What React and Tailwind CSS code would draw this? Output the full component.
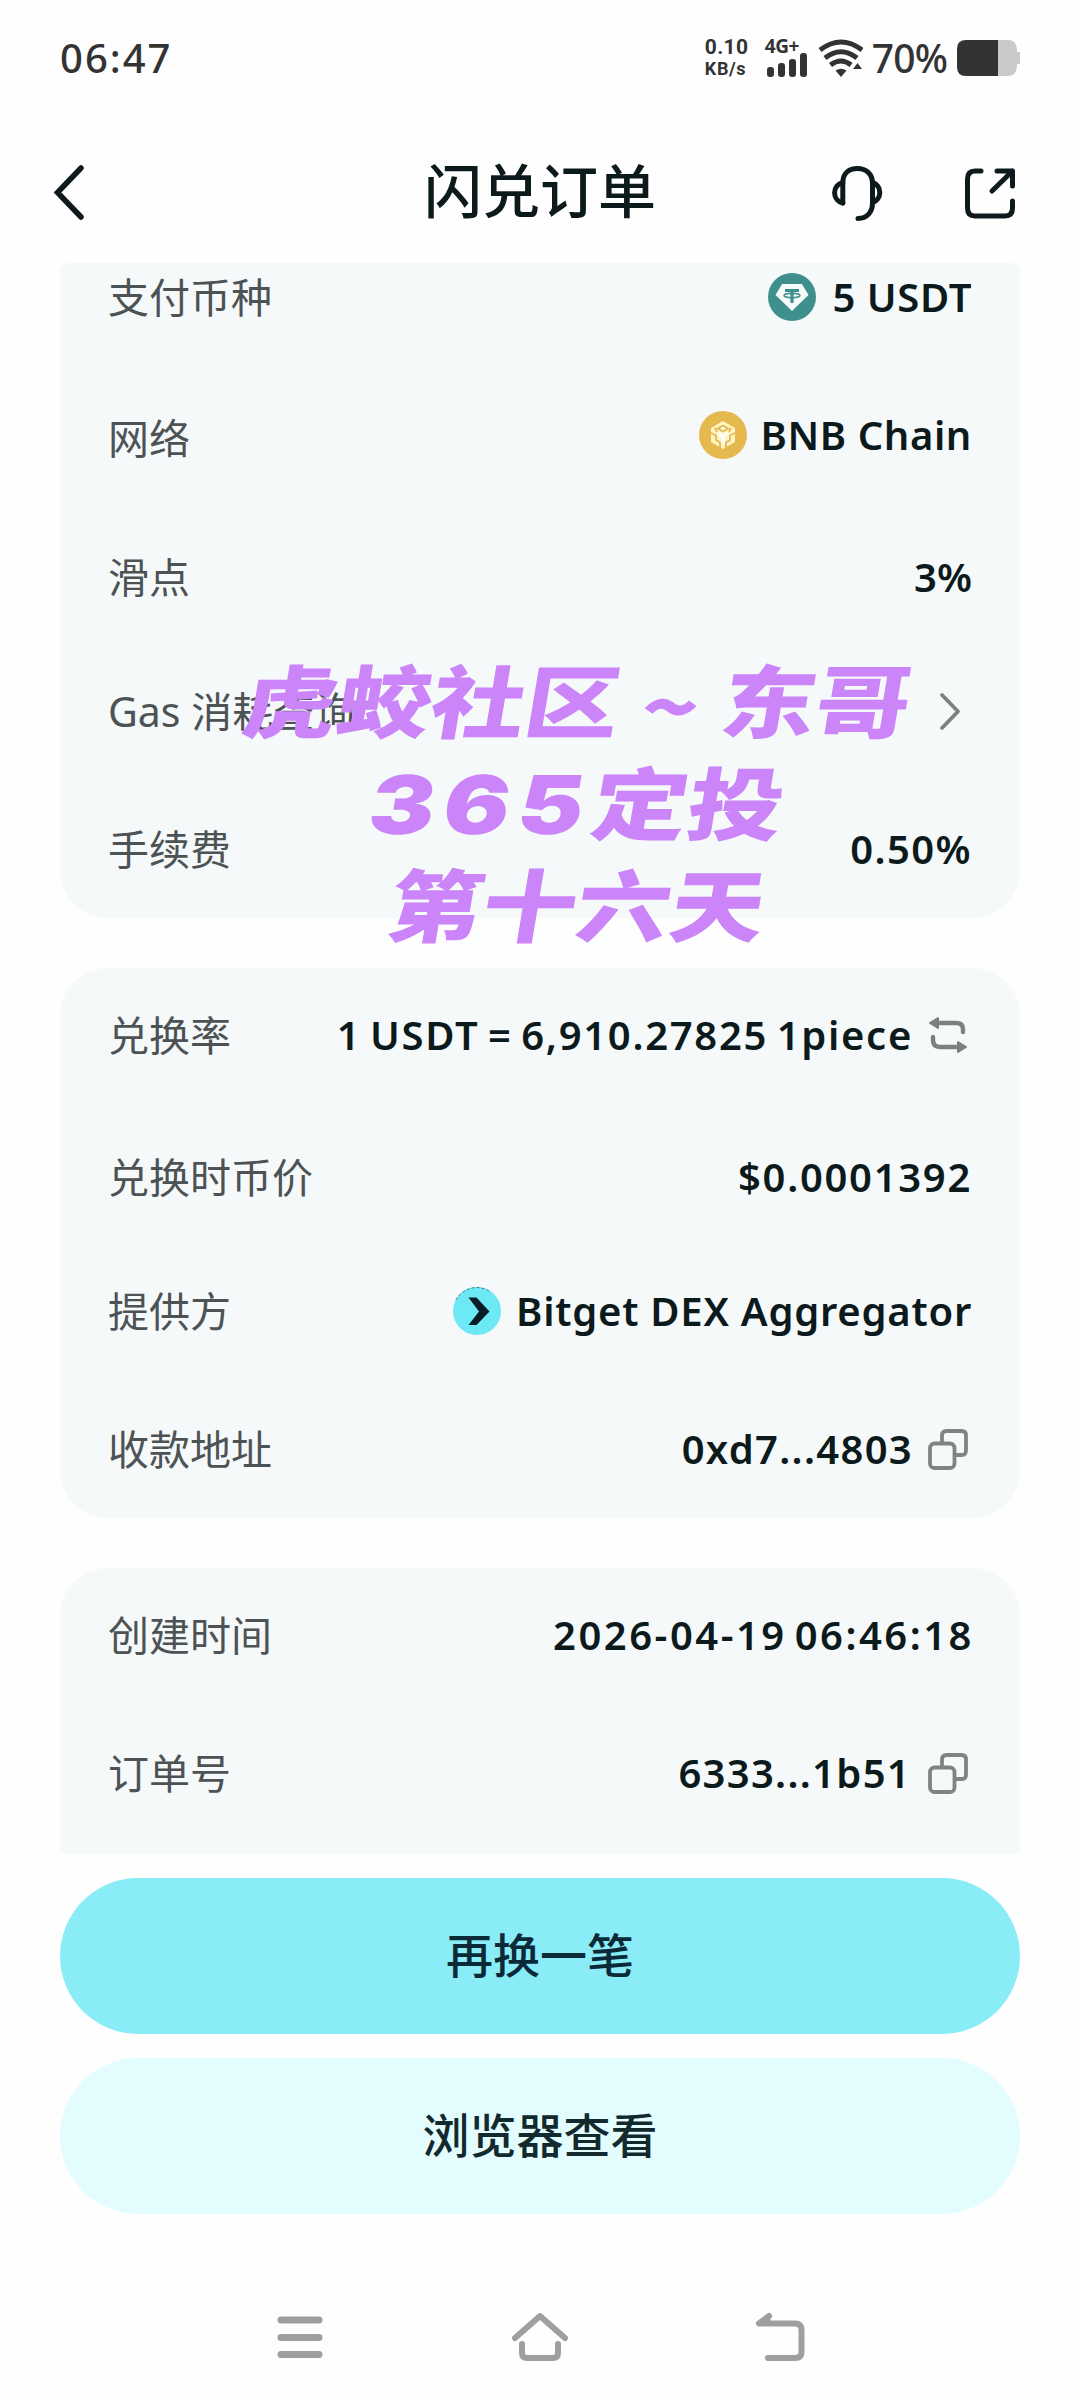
// src/App.jsx
const StatusBar = () => (
  <div className="flex h-[116px] items-center justify-between pl-[60px] pr-[60px] text-[#333333]">
    <span className="text-[40px] font-medium tracking-[2px]">06:47</span>
    <div className="flex items-center">
      <div className="mr-[16px] flex w-[44px] flex-col font-['Roboto'] font-bold">
        <span className="h-[22px] text-[21px] leading-[22px] tracking-[0.3px]">0.10</span>
        <span className="h-[22px] text-[18px] leading-[22px] tracking-[0.6px]">KB/s</span>
      </div>
      <div className="mr-[10px] flex w-[43px] flex-col">
        <span className="h-[15px] text-[19px] font-bold leading-[15px] tracking-[-0.5px]">4G+</span>
        <svg width="43" height="24" viewBox="0 0 43 24" fill="currentColor" className="overflow-visible">
          <rect x="2" y="13" width="7" height="10" rx="3" />
          <rect x="13" y="9" width="7" height="14" rx="3" />
          <rect x="24" y="5" width="7" height="18" rx="3" />
          <rect x="35" y="-1" width="7" height="24" rx="3" />
        </svg>
      </div>
      <svg className="mr-[9px]" width="45" height="38" viewBox="0 0 45 38">
        <g fill="none" stroke="currentColor" strokeWidth="5">
          <path d="M2 11Q23 -5 44 11" />
          <path d="M7 19Q23 6.500 39 19" />
          <path d="M12.500 26Q23 18 33 26" />
        </g>
        <path d="M17.500 31.500Q23 28 28.500 31.500L23 38Z" fill="currentColor" />
        <path d="M35 30L39.500 24L44 30Z" fill="currentColor" />
      </svg>
      <span className="mr-[10px] text-[39px] font-medium tracking-[-0.9px]">70%</span>
      <svg width="63" height="36" viewBox="0 0 63 36">
        <path d="M41 0H51Q59 0 60 9V12H63V24H60V27Q59 36 51 36H41Z" fill="#cacaca" />
        <path d="M9 0H41V36H9Q0 36 0 27V9Q0 0 9 0Z" fill="#333333" />
      </svg>
    </div>
  </div>
);

const Header = () => (
  <header className="grid h-[147px] grid-cols-[1fr_auto_1fr] items-start px-[52px] pt-[46px] text-[#0d1a1c]">
    <svg width="36" height="60" viewBox="0 0 36 60" fill="none" stroke="currentColor" strokeWidth="5.500">
      <path d="M29 6L5.500 30.500L29 55" strokeLinecap="round" strokeLinejoin="miter" />
    </svg>
    <h1 className="text-[58px] font-medium leading-[58px]">闪兑订单</h1>
    <div className="flex justify-end">
      <svg className="mr-[75px]" width="60" height="60" viewBox="0 0 60 60" fill="none" stroke="currentColor" strokeWidth="5" strokeLinecap="round" strokeLinejoin="round">
        <path d="M15.800 41V21C15.800 11 22 6.500 30.500 6.500S45.500 12 45.500 21V41C45.500 50 40 56.500 31 56.500" />
        <path d="M15.800 20.500A10.500 10.500 0 0 0 15.800 41" />
        <path d="M45.500 20.500A10.500 10.500 0 0 1 45.500 40.500" />
      </svg>
      <svg className="mr-[10px]" width="56" height="60" viewBox="0 0 56 60" fill="none" stroke="currentColor" strokeWidth="5" strokeLinecap="round" strokeLinejoin="round">
        <path d="M19 9H13Q5.500 9 5.500 17V46Q5.500 54 13 54H43Q50.500 54 50.500 46V39" />
        <path d="M35 9H50.500V24M50.500 9L30 29" />
      </svg>
    </div>
  </header>
);

const TetherIcon = () => (
  <svg width="48" height="48" viewBox="0 0 48 48">
    <circle cx="24" cy="24" r="24" fill="#3f8f8c" />
    <path d="M14 11H34L40.500 22L24 38L7.500 22Z" fill="#f5fbfb" />
    <path d="M17 17.500H31M24 17.500V30" fill="none" stroke="#3f8f8c" strokeWidth="3.200" />
    <ellipse cx="24" cy="22.500" rx="8" ry="2.200" fill="none" stroke="#3f8f8c" strokeWidth="1.500" />
  </svg>
);

const BnbIcon = () => (
  <svg width="48" height="48" viewBox="0 0 48 48">
    <circle cx="24" cy="24" r="24" fill="#e5b94e" />
    {/* light cube with its front edges cut out */}
    <path d="M24 10L36 17V31L24 38L12 31V17Z" fill="#fff3c4" />
    <path d="M24 13.500L31 17.500L24 21.500L17 17.500Z" fill="#e5b94e" />
    <path d="M24 15.500L27 17.500L24 19.500L21 17.500Z" fill="#fffdf2" />
    <g fill="none" stroke="#e5b94e" strokeWidth="1.800" strokeLinejoin="round">
      <path d="M12 22L17 24.500V29L21 31.500V37M36 22L31 24.500V29L27 31.500V37" />
      <path d="M16 17L18 21M32 17L30 21" />
    </g>
    <path d="M19 20.500L24 23L29 20.500V24L26 27V31L24 33L22 31V27L19 24Z" fill="#fffdf2" />
  </svg>
);

const BitgetIcon = () => (
  <svg width="48" height="48" viewBox="0 0 48 48">
    <circle cx="24" cy="24" r="24" fill="#6ce9f5" />
    <path d="M3 13A23.500 23.500 0 0 1 36 4" fill="none" stroke="#3d7f86" strokeWidth="1" strokeDasharray="3 2" />
    <path d="M15.500 10.500H23.500L36.500 24.500L23.500 38H15.500L26 24.500Z" fill="#0b1d24" />
  </svg>
);

const SwapIcon = () => (
  <svg className="mr-[4px]" width="40" height="40" viewBox="0 0 40 40" fill="none" stroke="#7b8080" strokeWidth="4.400" strokeLinecap="round">
    <path d="M9 8H28Q35 8 35 14V17M5 22V25Q5 32 12 32H30" />
    <path d="M2 8L10 3V13ZM38 32L30 27V37Z" fill="#7b8080" strokeWidth="2" strokeLinejoin="round" />
  </svg>
);

const CopyIcon = () => (
  <svg className="mr-[4px]" width="40" height="42" viewBox="0 0 40 42" fill="none" stroke="#7e8484" strokeWidth="3.800">
    <rect x="2" y="15.500" width="24.500" height="24.500" rx="4.500" />
    <path d="M14 15V7.500Q14 3 18.500 3H33.500Q38 3 38 7.500V22.500Q38 27 33.500 27H27" />
  </svg>
);

const ChevronIcon = () => (
  <svg className="mr-[9px]" width="26" height="40" viewBox="0 0 26 40" fill="none" stroke="#7b8080" strokeWidth="3.800" strokeLinecap="round" strokeLinejoin="round">
    <path d="M5 4L21 20.500L5 37" />
  </svg>
);

const Row = ({ label, className, valueClass = '', children }) => (
  <div className={`flex h-[60px] shrink-0 items-center justify-between pl-[48px] pr-[48px] ${className}`}>
    <span className="text-[41px] leading-[60px] text-[#4d5354]">{label}</span>
    <div className={`flex items-center whitespace-nowrap text-[40px] font-semibold leading-[60px] text-[#0d1a1c] ${valueClass}`}>
      {children}
    </div>
  </div>
);

const Watermark = () => (
  <div className="absolute left-[246px] top-[647px] flex w-[664px] flex-col items-center font-['Noto_Sans_CJK_SC',sans-serif] text-[79px] font-black leading-[102px] text-[#cb85f9]">
    <div className="h-[102px] -skew-x-8 scale-x-[1.19] whitespace-nowrap">虎蛟社区<span className="relative top-[5px] mx-[19px]">~</span>东哥</div>
    <div className="h-[102px] -skew-x-8 scale-x-[1.21] whitespace-nowrap"><span className="font-['Inter'] text-[81px] leading-[60px] tracking-[7px]">365</span>定投</div>
    <div className="h-[102px] -skew-x-8 scale-x-[1.19] whitespace-nowrap">第十六天</div>
  </div>
);

const NavBar = () => (
  <nav className="mt-[87px] flex justify-between px-[270px] text-[#9f9f9f]">
    <svg width="60" height="60" viewBox="0 0 60 60" stroke="currentColor" strokeWidth="7" strokeLinecap="round">
      <path d="M11 19H49M11 36.500H49M11 53.500H49" />
    </svg>
    <svg width="60" height="62" viewBox="0 0 60 62" fill="none" stroke="currentColor" strokeWidth="6" strokeLinecap="round" strokeLinejoin="round">
      <path d="M5 37L30 15L55 37" />
      <path d="M12 43V52Q12 57 17 57H43Q48 57 48 52V43" />
    </svg>
    <svg width="60" height="62" viewBox="0 0 60 62" fill="none" stroke="currentColor" strokeWidth="6" strokeLinecap="round" strokeLinejoin="round">
      <path d="M19 15L9 22.500H45Q51.500 22.500 51.500 29V51Q51.500 57 45 57H18" />
      <path d="M9 22.500L19 15V21Z" fill="currentColor" strokeWidth="3" />
    </svg>
  </nav>
);

function App() {
  return (
    <div className="relative flex h-[2400px] w-[1080px] flex-col overflow-hidden bg-[#fefefe] font-['Noto_Sans','Noto_Sans_CJK_SC',sans-serif]">
      <StatusBar />
      <Header />

      <main className="flex flex-col px-[60px]">
        <section className="flex h-[655px] flex-col rounded-b-[48px] rounded-t-[8px] bg-[#f5f9fa]">
          <Row label="支付币种" className="mt-[4px]" valueClass="tracking-[0.6px]">
            <TetherIcon />
            <span className="ml-[16px]">5 USDT</span>
          </Row>
          <Row label={<span className="relative top-[3px]">网络</span>} className="mt-[78px]" valueClass="tracking-[0.6px]">
            <BnbIcon />
            <span className="ml-[13px]">BNB Chain</span>
          </Row>
          <Row label="滑点" className="mt-[82px]">3%</Row>
          <Row label="Gas 消耗查询" className="mt-[74px]">
            <ChevronIcon />
          </Row>
          <Row label="手续费" className="mt-[78px]" valueClass="tracking-[1.4px]">0.50%</Row>
        </section>

        <section className="mt-[50px] flex h-[550px] flex-col rounded-[48px] bg-[#f5f9fa]">
          <Row label="兑换率" className="mt-[37px]">
            <span className="mr-[15px] tracking-[1.700px] [word-spacing:-3.500px]">1 USDT = 6,910.27825 1piece</span>
            <SwapIcon />
          </Row>
          <Row label="兑换时币价" className="mt-[82px]" valueClass="tracking-[1.700px]">$0.0001392</Row>
          <Row label="提供方" className="mt-[74px]" valueClass="tracking-[0.750px]">
            <BitgetIcon />
            <span className="ml-[15px]">Bitget DEX Aggregator</span>
          </Row>
          <Row label="收款地址" className="mt-[78px]">
            <span className="mr-[15px] tracking-[1.300px]">0xd7...4803</span>
            <CopyIcon />
          </Row>
        </section>

        <section className="mt-[50px] flex h-[286px] flex-col rounded-t-[48px] bg-[#f5f9fa]">
          <Row label="创建时间" className="mt-[37px]" valueClass="tracking-[2.500px] [word-spacing:-5px] pr-0 -mr-[2px]">2026-04-19 06:46:18</Row>
          <Row label="订单号" className="mt-[78px]">
            <span className="mr-[17px] tracking-[1.300px]">6333...1b51</span>
            <CopyIcon />
          </Row>
        </section>

        <button className="mt-[24px] h-[156px] rounded-full bg-[#8aecf7] pb-[2px] text-[47px] font-medium text-[#0b2a38]">再换一笔</button>
        <button className="mt-[24px] h-[156px] rounded-full bg-[#e3fdff] pb-[2px] text-[47px] font-medium text-[#12292d]">浏览器查看</button>
      </main>

      <NavBar />
      <Watermark />
    </div>
  );
}

export default App;
